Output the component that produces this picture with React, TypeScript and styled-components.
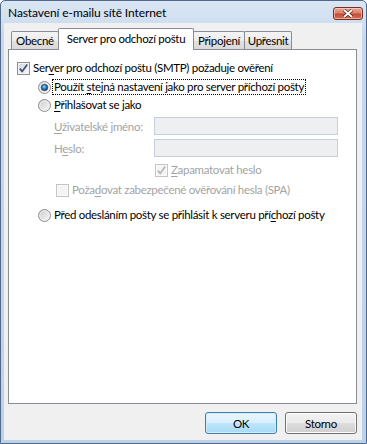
import React from 'react';
import styled, { createGlobalStyle } from 'styled-components';

const Global = createGlobalStyle`
  html, body { margin: 0; padding: 0; background: #ffffff; }
  body {
    font-family: "Lato", "Segoe UI", sans-serif;
    font-size: 11.5px;
    letter-spacing: -0.3px;
    color: #000;
  }
  * { box-sizing: border-box; }
`;

const Window = styled.div`
  width: 367px;
  height: 444px;
  display: flex;
  flex-direction: column;
  background: linear-gradient(#dae6f3, #c6d8ed 40px, #bdd1e9);
  border: 1px solid #4f6a8c;
  border-radius: 5px 5px 0 0;
  overflow: hidden;
`;

const TitleBar = styled.div`
  height: 22px;
  flex: none;
  display: flex;
  align-items: flex-start;
  justify-content: space-between;
  padding-left: 7px;
`;

const TitleText = styled.span`
  margin-top: 4px;
  font-size: 12px;
  letter-spacing: -0.1px;
  line-height: 16px;
  color: #000;
`;

const CloseButton = styled.div`
  width: 30px;
  height: 13px;
  margin-top: 6px;
  margin-right: 3px;
  border: 1px solid #7a2e23;
  border-radius: 3px;
  background: linear-gradient(#e7a898, #d8826e 45%, #c44c33 55%, #d0705a);
  box-shadow: inset 0 0 0 1px rgba(255, 220, 210, 0.6);
  display: flex;
  align-items: center;
  justify-content: center;
`;

const Client = styled.div`
  flex: 1;
  margin: 0 4px 3px 3px;
  background: #f0f0f0;
  display: flex;
  flex-direction: column;
  padding: 5px 5px 0 4px;
`;

const TabStrip = styled.div`
  height: 22px;
  flex: none;
  display: flex;
  align-items: flex-start;
  padding-left: 3px;
  margin-bottom: -1px;
  position: relative;
  z-index: 1;
`;

const Tab = styled.div<{ $w: number; $active?: boolean }>`
  width: ${(p) => p.$w}px;
  height: ${(p) => (p.$active ? 22 : 18)}px;
  margin-top: ${(p) => (p.$active ? 0 : 3)}px;
  margin-left: -1px;
  &:first-child { margin-left: 0; }
  border: 1px solid #898c95;
  border-bottom: none;
  border-radius: 2px 2px 0 0;
  background: ${(p) =>
    p.$active ? '#ffffff' : 'linear-gradient(#f4f4f4, #ececec 50%, #e2e2e2 51%, #d9d9d9)'};
  position: relative;
  z-index: ${(p) => (p.$active ? 2 : 1)};
  display: flex;
  justify-content: center;
  align-items: center;
  padding-bottom: ${(p) => (p.$active ? 3 : 0)}px;
  white-space: nowrap;
`;

const Panel = styled.div`
  height: 355px;
  flex: none;
  background: #ffffff;
  border: 1px solid #898c95;
  display: flex;
  flex-direction: column;
  padding-top: 10px;
`;

const Row = styled.div<{ $indent: number; $gap?: number; $h?: number }>`
  display: flex;
  align-items: center;
  height: ${(p) => p.$h ?? 16}px;
  margin-left: ${(p) => p.$indent}px;
  margin-top: ${(p) => p.$gap ?? 0}px;
  white-space: nowrap;
`;

const Label = styled.span<{ $disabled?: boolean; $focus?: boolean }>`
  color: ${(p) => (p.$disabled ? '#a3a3a3' : '#000')};
  margin-left: 1px;
  line-height: 14px;
  padding: 0 1px;
  border: 1px ${(p) => (p.$focus ? 'dotted #000' : 'solid transparent')};
  u { text-decoration: underline; text-underline-offset: 2px; }
`;

const FieldLabel = styled.span`
  width: 100px;
  color: #a3a3a3;
  u { text-decoration: underline; text-underline-offset: 2px; }
`;

const TextBox = styled.input`
  width: 184px;
  height: 18px;
  border: 1px solid #c3cfdc;
  background: #eeeff1;
  padding: 0;
  margin: 0;
`;

const BoxIcon = styled.span<{ $disabled?: boolean }>`
  width: 13px;
  height: 13px;
  flex: none;
  border: 1px solid ${(p) => (p.$disabled ? '#c4c4c4' : '#8e8f8f')};
  background: ${(p) =>
    p.$disabled
      ? '#f4f4f4'
      : 'linear-gradient(135deg, #d4d6da, #f7f7f7)'};
  box-shadow: inset 0 0 0 1px ${(p) => (p.$disabled ? '#fafafa' : '#f4f4f4')};
  display: flex;
  align-items: center;
  justify-content: center;
`;

const ButtonRow = styled.div`
  display: flex;
  justify-content: flex-end;
  gap: 8px;
  margin-top: 8px;
`;

const Button = styled.button<{ $default?: boolean }>`
  width: 72px;
  height: 22px;
  padding: 0;
  font-family: inherit;
  font-size: 11.5px;
  letter-spacing: inherit;
  color: #000;
  border-radius: 3px;
  border: 1px solid ${(p) => (p.$default ? '#3c7fb1' : '#707070')};
  background: ${(p) =>
    p.$default
      ? 'linear-gradient(#eaf6fd, #d9f0fc 50%, #bee6fd 51%, #a7d9f5)'
      : 'linear-gradient(#f2f2f2, #ebebeb 50%, #dddddd 51%, #cfcfcf)'};
  box-shadow: inset 0 0 0 1px ${(p) => (p.$default ? '#d4ebf8' : '#fcfcfc')};
`;

const CheckBox = ({ checked, disabled }: { checked?: boolean; disabled?: boolean }) => (
  <BoxIcon $disabled={disabled}>
    {checked && (
      <svg width="11" height="11" viewBox="0 0 11 11">
        <path
          d="M1.8 5.6 L4.2 8.4 L9.2 1.6"
          fill="none"
          stroke={disabled ? '#b5b5b5' : '#3a4f7c'}
          strokeWidth="1.7"
        />
      </svg>
    )}
  </BoxIcon>
);

const Radio = ({ checked }: { checked?: boolean }) => (
  <svg width="13" height="13" viewBox="0 0 13 13" style={{ flex: 'none' }}>
    <defs>
      <linearGradient id="rbg" x1="0" y1="0" x2="1" y2="1">
        <stop offset="0" stopColor="#c9c9c9" />
        <stop offset="1" stopColor="#fbfbfb" />
      </linearGradient>
      <radialGradient id="rdot" cx="0.45" cy="0.4" r="0.65">
        <stop offset="0" stopColor="#9fdcff" />
        <stop offset="0.45" stopColor="#2f7fc0" />
        <stop offset="1" stopColor="#0b2b52" />
      </radialGradient>
    </defs>
    <circle cx="6.5" cy="6.5" r="6" fill="url(#rbg)" stroke="#8f8f8f" />
    <circle cx="6.5" cy="6.5" r="4.6" fill="none" stroke="#f4f4f4" strokeWidth="0.8" />
    {checked && <circle cx="6.5" cy="6.5" r="3.3" fill="url(#rdot)" stroke="#20466f" strokeWidth="0.6" />}
  </svg>
);

export default function App() {
  return (
    <>
      <Global />
      <Window>
        <TitleBar>
          <TitleText>Nastavení e-mailu sítě Internet</TitleText>
          <CloseButton>
            <svg width="12" height="9" viewBox="0 0 12 9">
              <path d="M2 1 L10 8 M10 1 L2 8" stroke="#5a2018" strokeWidth="3.2" />
              <path d="M2 1 L10 8 M10 1 L2 8" stroke="#ffffff" strokeWidth="1.8" />
            </svg>
          </CloseButton>
        </TitleBar>
        <Client>
          <TabStrip>
            <Tab $w={48}>Obecné</Tab>
            <Tab $w={136} $active>Server pro odchozí poštu</Tab>
            <Tab $w={52}>Připojení</Tab>
            <Tab $w={48}>Upřesnit</Tab>
          </TabStrip>
          <Panel>
            <Row $indent={8}>
              <CheckBox checked />
              <Label>Ser<u>v</u>er pro odchozí poštu (SMTP) požaduje ověření</Label>
            </Row>
            <Row $indent={29} $gap={3}>
              <Radio checked />
              <Label $focus>Použít <u>s</u>tejná nastavení jako pro server příchozí pošty</Label>
            </Row>
            <Row $indent={29} $gap={2}>
              <Radio />
              <Label><u>P</u>řihlašovat se jako</Label>
            </Row>
            <Row $indent={45} $gap={4} $h={18}>
              <FieldLabel><u>U</u>živatelské jméno:</FieldLabel>
              <TextBox disabled />
            </Row>
            <Row $indent={45} $gap={4} $h={18}>
              <FieldLabel>H<u>e</u>slo:</FieldLabel>
              <TextBox disabled />
            </Row>
            <Row $indent={146} $gap={5}>
              <CheckBox checked disabled />
              <Label $disabled><u>Z</u>apamatovat heslo</Label>
            </Row>
            <Row $indent={47} $gap={4}>
              <CheckBox disabled />
              <Label $disabled>Poža<u>d</u>ovat zabezpečené ověřování hesla (SPA)</Label>
            </Row>
            <Row $indent={29} $gap={9}>
              <Radio />
              <Label>Před odesláním pošty se přihlásit k serveru pří<u>c</u>hozí pošty</Label>
            </Row>
          </Panel>
          <ButtonRow>
            <Button $default>OK</Button>
            <Button>Storno</Button>
          </ButtonRow>
        </Client>
      </Window>
    </>
  );
}
